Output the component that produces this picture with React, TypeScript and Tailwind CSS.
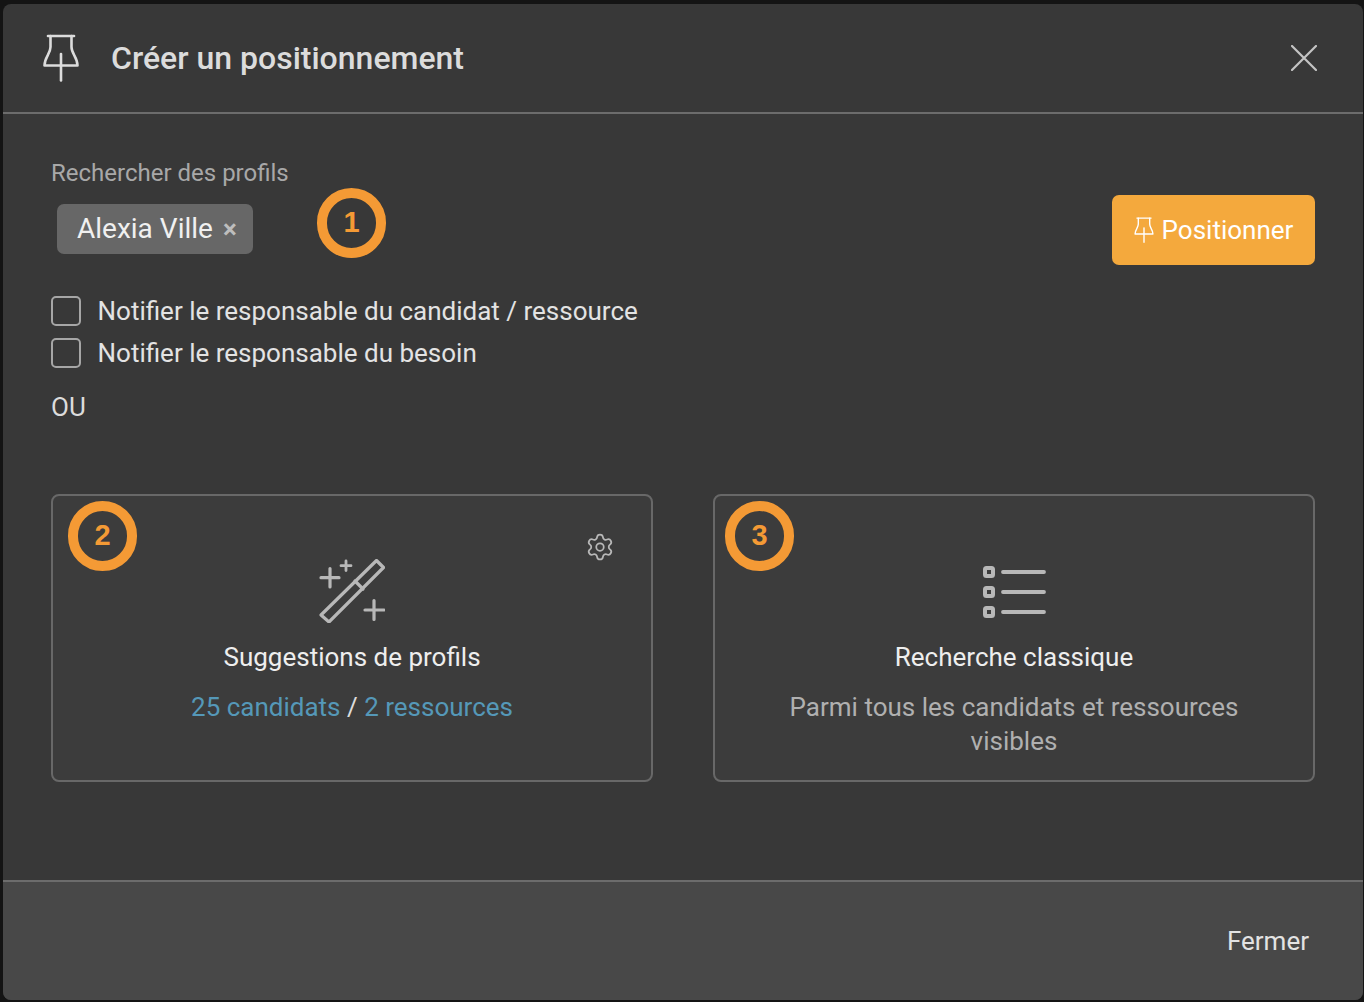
import React from "react";
import { Settings } from "lucide-react";

function Pin({ className }: { className: string }) {
  return (
    <svg viewBox="0 0 36 48" fill="none" stroke="currentColor" strokeWidth="2.6" strokeLinecap="round" strokeLinejoin="round" className={className}>
      <path d="M5 2H31" />
      <path d="M7.5 2V13C7.5 20 1.5 23 1.5 31.5H34.5C34.5 23 28.5 20 28.5 13V2" />
      <path d="M18 20V46.5" />
    </svg>
  );
}

function Badge({ n, className }: { n: string; className: string }) {
  return (
    <div className={"absolute flex h-[70px] w-[69px] items-center justify-center rounded-full border-[10px] border-[#f49a35] text-[29px] font-semibold text-[#f49a35] " + className} style={{ fontFamily: '"Liberation Sans", sans-serif' }}>
      {n}
    </div>
  );
}

function Check({ label }: { label: string }) {
  return (
    <label className="flex h-[42px] items-center gap-[16.5px]">
      <span className="h-[30px] w-[30px] rounded-[5px] border-2 border-[#a6a6a6]" />
      <span className="text-[26px] leading-[42px] text-[#e3e3e3]">{label}</span>
    </label>
  );
}

export default function App() {
  return (
    <div className="h-[1002px] w-[1364px] overflow-hidden bg-[#141414] pt-[4px] pl-[3px]" style={{ fontFamily: 'Roboto, "Liberation Sans", sans-serif' }}>
      <div className="flex h-[996px] w-[1360px] flex-col overflow-hidden rounded-[8px] bg-[#383838]">
        <header className="flex h-[110px] shrink-0 items-center border-b-2 border-[#6c6c6c] pr-[46px] pl-[40px]">
          <Pin className="h-[48px] w-[36px] text-[#dcdcdc]" />
          <h1 className="ml-[32px] flex-1 text-[32px] font-medium text-[#dcdcdc]">Créer un positionnement</h1>
          <svg viewBox="0 0 26 26" fill="none" stroke="#c4c4c4" strokeWidth="2.2" strokeLinecap="round" className="h-[26px] w-[26px]">
            <path d="M1 1L25 25M25 1L1 25" />
          </svg>
        </header>

        <main className="flex-1 px-[48px] pt-[44px]">
          <div className="flex justify-between">
            <div className="relative">
              <div className="text-[24px] leading-[30px] text-[#a8a8a8]">Rechercher des profils</div>
              <div className="mt-[16px] ml-[6px] flex h-[50px] w-[196px] items-center rounded-[7px] bg-[#676767] pl-[20px] text-[28px] text-[#f0f0f0]">
                Alexia Ville
                <span className="ml-[10px] text-[26px] leading-none font-bold text-[#bdbdbd]">×</span>
              </div>
              <Badge n="1" className="top-[30px] left-[266px]" />
            </div>
            <button className="mt-[37px] flex h-[70px] w-[203px] items-center justify-center gap-[8px] rounded-[7px] bg-[#f4a93d] text-[26px] text-white">
              <Pin className="h-[26px] w-[20px] text-white" />
              Positionner
            </button>
          </div>

          <div className="mt-[25px] flex flex-col">
            <Check label="Notifier le responsable du candidat / ressource" />
            <Check label="Notifier le responsable du besoin" />
          </div>
          <div className="mt-[18px] text-[26px] leading-[30px] text-[#dcdcdc]">OU</div>

          <div className="mt-[72px] grid grid-cols-2 gap-[60px]">
            <section className="relative flex h-[288px] flex-col items-center rounded-[8px] border-2 border-[#686868] bg-[#3c3c3c] pt-[63px]">
              <Badge n="2" className="top-[5px] left-[15px]" />
              <Settings className="absolute top-[36px] right-[36px] h-[30px] w-[30px] text-[#b8b8b8]" strokeWidth={1.4} />
              <svg viewBox="0 0 66 64" fill="none" stroke="#b8b8b8" strokeWidth="3.2" strokeLinecap="round" strokeLinejoin="round" className="h-[64px] w-[66px]">
                <path d="M2 56L57.5 1.5L64.5 8.5L10 63Z" />
                <path d="M36 22L44 30" />
                <path d="M11 9.5V28M2 18.7H20" />
                <path d="M27 2V11.5M22 6.7H32" strokeWidth="2.8" />
                <path d="M55 41.5V60.5M46 51H65" />
              </svg>
              <h2 className="mt-[17px] text-[26px] leading-[34px] text-[#eeeeee]">Suggestions de profils</h2>
              <p className="mt-[16px] text-[26px] leading-[34px] text-[#dcdcdc]">
                <span className="text-[#5598b8]">25 candidats</span> / <span className="text-[#5598b8]">2 ressources</span>
              </p>
            </section>

            <section className="relative flex h-[288px] flex-col items-center rounded-[8px] border-2 border-[#686868] bg-[#3c3c3c] pt-[70px]">
              <Badge n="3" className="top-[5px] left-[10px]" />
              <svg viewBox="0 0 64 52" fill="none" stroke="#b8b8b8" strokeLinecap="round" strokeLinejoin="round" className="h-[52px] w-[64px]">
                <g strokeWidth="4">
                  <rect x="3" y="2" width="8" height="8" rx="1.5" />
                  <rect x="3" y="22" width="8" height="8" rx="1.5" />
                  <rect x="3" y="42" width="8" height="8" rx="1.5" />
                </g>
                <path d="M21 6H62M21 26H62M21 46H62" strokeWidth="3.8" />
              </svg>
              <h2 className="mt-[22px] text-[26px] leading-[34px] text-[#eeeeee]">Recherche classique</h2>
              <p className="mt-[16px] w-[500px] text-center text-[26px] leading-[34px] text-[#b0b0b0]">
                Parmi tous les candidats et ressources visibles
              </p>
            </section>
          </div>
        </main>

        <footer className="flex h-[120px] shrink-0 items-center justify-end border-t-2 border-[#6c6c6c] bg-[#484848] pr-[54px]">
          <span className="text-[26px] text-[#e3e3e3]">Fermer</span>
        </footer>
      </div>
    </div>
  );
}
